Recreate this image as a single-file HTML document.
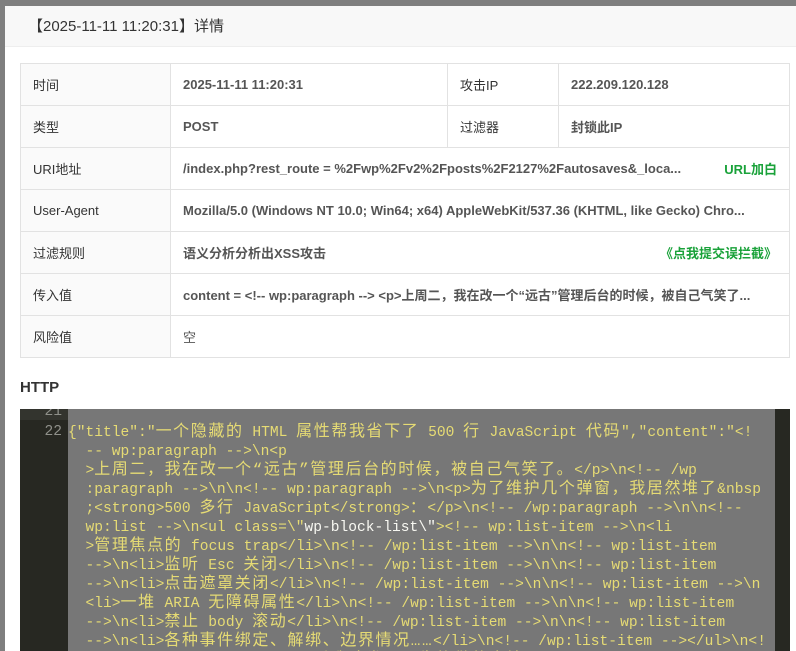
<!DOCTYPE html>
<html><head><meta charset="utf-8"><style>
*{margin:0;padding:0;box-sizing:border-box}
html,body{width:796px;height:651px;overflow:hidden}
body{background:#7f7f7f;font-family:"Liberation Sans","Noto Sans CJK SC",sans-serif;position:relative}
.modal{position:absolute;left:5px;top:6px;width:800px;height:660px;background:#fff}
.hd{height:41px;background:#f8f8f8;border-bottom:1px solid #eee;padding-left:23px;line-height:41px;font-size:15px;color:#333}
table{position:absolute;left:15px;top:57px;width:770px;border-collapse:collapse;font-size:13px}
td{border:1px solid #e2e2e2;height:42px;padding:0 12px;color:#333;white-space:nowrap}
td.l{background:#fafafa;width:150px}
td.v{font-weight:bold;color:#555}
.f{display:flex;justify-content:space-between;align-items:center}
.g{color:#1aa23a;font-weight:bold}
.http{position:absolute;left:15px;top:373px;font-weight:bold;font-size:15px;color:#333}
.code{position:absolute;left:15px;top:403px;width:770px;height:260px;background:#272822;overflow:hidden}
.body{position:absolute;left:48px;top:0;width:707px;height:260px;background:#777}
.ln{position:absolute;left:0;width:48px;text-align:right;padding-right:6px;color:#8f908a;font:14.6px "Liberation Mono",monospace}
pre{position:absolute;left:48px;top:15px;font:14.6px/19px "Liberation Mono","Noto Sans CJK SC",monospace;color:#e6db74}
i{font-style:normal;font-size:16px;letter-spacing:1.6px;line-height:0}
.w{color:#f8f8f2}
</style></head><body>
<div class="modal">
<div class="hd">【2025-11-11 11:20:31】详情</div>
<table>
<tr><td class="l">时间</td><td class="v" style="width:277px">2025-11-11 11:20:31</td><td class="l" style="width:111px;background:#fff">攻击IP</td><td class="v g">222.209.120.128</td></tr>
<tr><td class="l">类型</td><td class="v">POST</td><td style="background:#fff">过滤器</td><td class="v">封锁此IP</td></tr>
<tr><td class="l">URI地址</td><td class="v" colspan="3"><div class="f"><span>/index.php?rest_route = %2Fwp%2Fv2%2Fposts%2F2127%2Fautosaves&amp;_loca...</span><span class="g">URL加白</span></div></td></tr>
<tr><td class="l">User-Agent</td><td class="v" colspan="3">Mozilla/5.0 (Windows NT 10.0; Win64; x64) AppleWebKit/537.36 (KHTML, like Gecko) Chro...</td></tr>
<tr><td class="l">过滤规则</td><td class="v" colspan="3"><div class="f"><span>语义分析分析出XSS攻击</span><span class="g">《点我提交误拦截》</span></div></td></tr>
<tr><td class="l">传入值</td><td class="v" colspan="3">content = &lt;!-- wp:paragraph --&gt; &lt;p&gt;上周二，我在改一个“远古”管理后台的时候，被自己气笑了...</td></tr>
<tr><td class="l">风险值</td><td class="v" colspan="3" style="font-weight:normal">空</td></tr>
</table>
<div class="http">HTTP</div>
<div class="code">
<div style="position:absolute;left:0;top:0;width:48px;height:11px;background:#33342e"></div>
<div class="body"></div>
<div class="ln" style="top:-5px">21</div>
<div class="ln" style="top:15px">22</div>
<pre>{"title":"<i>一个隐藏的</i> HTML <i>属性帮我省下了</i> 500 <i>行</i> JavaScript <i>代码</i>","content":"&lt;!
  -- wp:paragraph --&gt;\n&lt;p
  &gt;<i>上周二，我在改一个“远古”管理后台的时候，被自己气笑了。</i>&lt;/p&gt;\n&lt;!-- /wp
  :paragraph --&gt;\n\n&lt;!-- wp:paragraph --&gt;\n&lt;p&gt;<i>为了维护几个弹窗，我居然堆了</i>&amp;nbsp
  ;&lt;strong&gt;500 <i>多行</i> JavaScript&lt;/strong&gt;<i>：</i>&lt;/p&gt;\n&lt;!-- /wp:paragraph --&gt;\n\n&lt;!--
  wp:list --&gt;\n&lt;ul class=\"<span class="w">wp-block-list\"</span>&gt;&lt;!-- wp:list-item --&gt;\n&lt;li
  &gt;<i>管理焦点的</i> focus trap&lt;/li&gt;\n&lt;!-- /wp:list-item --&gt;\n\n&lt;!-- wp:list-item
  --&gt;\n&lt;li&gt;<i>监听</i> Esc <i>关闭</i>&lt;/li&gt;\n&lt;!-- /wp:list-item --&gt;\n\n&lt;!-- wp:list-item
  --&gt;\n&lt;li&gt;<i>点击遮罩关闭</i>&lt;/li&gt;\n&lt;!-- /wp:list-item --&gt;\n\n&lt;!-- wp:list-item --&gt;\n
  &lt;li&gt;<i>一堆</i> ARIA <i>无障碍属性</i>&lt;/li&gt;\n&lt;!-- /wp:list-item --&gt;\n\n&lt;!-- wp:list-item
  --&gt;\n&lt;li&gt;<i>禁止</i> body <i>滚动</i>&lt;/li&gt;\n&lt;!-- /wp:list-item --&gt;\n\n&lt;!-- wp:list-item
  --&gt;\n&lt;li&gt;<i>各种事件绑定、解绑、边界情况……</i>&lt;/li&gt;\n&lt;!-- /wp:list-item --&gt;&lt;/ul&gt;\n&lt;!
  -- wp:paragraph --&gt;\n&lt;p&gt;<i>最后我才发现原生能做的事情</i></pre>
</div>
</div>
</body></html>
